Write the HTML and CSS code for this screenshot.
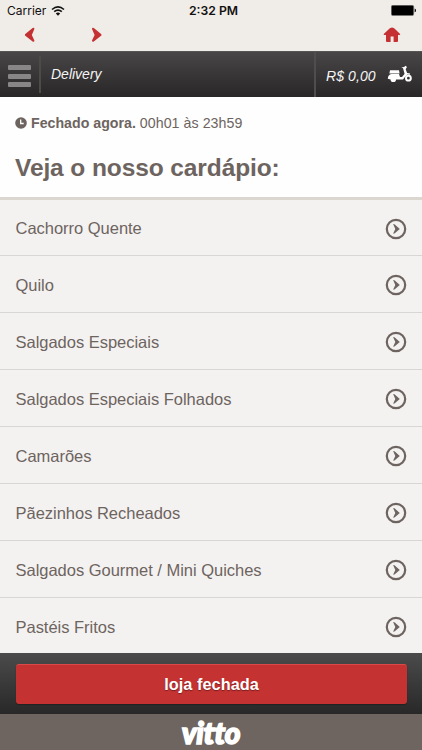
FILE: index.html
```
<!DOCTYPE html>
<html lang="pt-BR">
<head>
<meta charset="utf-8">
<title>Delivery</title>
<link rel="stylesheet" href="styles.css">
</head>
<body>
<svg class="defs" width="0" height="0" aria-hidden="true">
  <symbol id="go" viewBox="0 0 22 22"><circle cx="11" cy="11" r="9.2" fill="none" stroke="#6d6460" stroke-width="2.2"/><path d="M8.2 6.2Q9 5.8 9.8 6.5L14.8 11 9.8 15.3Q9 16 8.2 15.6L10.3 11Z" fill="#6d6460"/></symbol>
</svg>
<div class="app">
  <div class="status">
    <div class="carrier"><span>Carrier</span>
      <svg width="14" height="10" viewBox="0 0 14 10"><g fill="none" stroke="#111" stroke-width="1.6"><path d="M1 3.5Q7-1.6 13 3.5"/><path d="M3.2 5.7Q7 2.4 10.8 5.7"/></g><path d="M4.8 7.4Q7 5.7 9.2 7.4L7 9.7Z" fill="#111"/></svg>
    </div>
    <div class="time">2:32 PM</div>
    <svg class="battery" width="26" height="11" viewBox="0 0 26 11"><rect x=".3" y=".3" width="22.4" height="10.2" rx="1.5" fill="#000" stroke="#777" stroke-width=".6"/><path d="M23.7 3.5Q25 4 25 5.4T23.7 7.3Z" fill="#000"/></svg>
  </div>
  <div class="nav">
    <svg width="11" height="16" viewBox="0 0 11 16"><path d="M7.6 1Q9.4.2 9.4 2L6.8 8 9.4 13.4Q9.4 15.4 7.6 14.6L0 8.6V7.2Z" fill="#c53133"/></svg>
    <svg class="next" width="11" height="16" viewBox="0 0 11 16"><path d="M2.8 1Q1 .2 1 2L3.6 8 1 13.4Q1 15.4 2.8 14.6L10.4 8.6V7.2Z" fill="#c53133"/></svg>
    <svg class="home" width="18" height="16" viewBox="0 0 18 16"><path d="M9 .4Q11 .4 12 1.9L17.3 7.2 16.6 8H15V14Q15 15 14 15H10.6V9.5H7.6V15H4Q3 15 3 14V8H1.2L.5 7.2 6 1.9Q7 .4 9 .4Z" fill="#c53133"/></svg>
  </div>
  <header class="bar">
    <div class="menu"><i></i><i></i><i></i></div>
    <div class="title">Delivery</div>
    <div class="cart"><span>R$ 0,00</span>
      <svg width="25" height="18" viewBox="0 0 25 18"><path d="M3 5.3H12L12.6 8.4H2.4Z" fill="#fff"/><path d="M.8 13.8C.8 10.5 2.7 9 5 9H12L13 12H15L17.6 9 16 3 18 2.4 20.4 8.8 16 14.4H9A2.7 2.7 0 0 1 3.6 14.4Z" fill="#fff"/><path d="M14.2 2.4 17 1.9 18.5.8 20 2 18.4 4.6 17 3.4Z" fill="#fff"/><path d="M17.2 11.5Q19 7.6 22.8 9.2" fill="none" stroke="#fff" stroke-width="1.6"/><circle cx="21.4" cy="13.2" r="2.4" fill="none" stroke="#fff" stroke-width="2"/></svg>
    </div>
  </header>
  <section class="intro">
    <p><svg width="12" height="12" viewBox="0 0 12 12"><circle cx="6" cy="6" r="5.8" fill="#6d6460"/><path d="M5.7 2.5V6.5H8.7" fill="none" stroke="#fff" stroke-width="1.3"/></svg><b>Fechado agora.</b> <span>00h01 às 23h59</span></p>
    <h1>Veja o nosso cardápio:</h1>
  </section>
  <ul class="list">
    <li><span>Cachorro Quente</span><svg><use href="#go"/></svg></li>
    <li><span>Quilo</span><svg><use href="#go"/></svg></li>
    <li><span>Salgados Especiais</span><svg><use href="#go"/></svg></li>
    <li><span>Salgados Especiais Folhados</span><svg><use href="#go"/></svg></li>
    <li><span>Camarões</span><svg><use href="#go"/></svg></li>
    <li><span>Pãezinhos Recheados</span><svg><use href="#go"/></svg></li>
    <li><span>Salgados Gourmet / Mini Quiches</span><svg><use href="#go"/></svg></li>
    <li><span>Pastéis Fritos</span><svg><use href="#go"/></svg></li>
  </ul>
  <div class="action"><button>loja fechada</button></div>
  <footer class="brand"><span>vitto</span></footer>
</div>
</body>
</html>
```
FILE: styles.css
```
* { box-sizing: border-box; }
body { margin: 0; font-family: "Liberation Sans", Arial, sans-serif; color: #6d6460; background: #f0ece7; }
svg { display: block; flex: none; }
.defs { position: absolute; }
.app { width: 422px; height: 750px; overflow: hidden; display: flex; flex-direction: column; }

.status { height: 21px; flex: none; display: grid; grid-template-columns: 1fr auto 1fr; align-items: center; padding: 0 5px 0 7px; font-family: Inter, sans-serif; font-size: 12px; color: #111; }
.carrier { display: flex; align-items: center; gap: 5px; }
.time { font-weight: 600; padding-left: 3px; font-size: 12.2px; }
.battery { justify-self: end; }

.nav { height: 30px; flex: none; display: flex; align-items: flex-start; padding: 6px 21px 0 25px; }
.next { margin-left: 55px; }
.home { margin-left: auto; }

.bar { height: 46px; flex: none; display: flex; color: #f5f5f5; font-style: italic; font-size: 14px; background: linear-gradient(#494647, #282627); border-top: 1px solid #555; }
.menu { width: 41px; margin: 4px 0; padding: 9px 0 0 8px; border-right: 2px solid #4d4a48; display: flex; flex-direction: column; gap: 3.5px; }
.menu i { width: 23px; height: 5px; border-radius: 1px; background: #898687; }
.title { padding: 14px 0 0 10px; line-height: 16px; }
.cart { margin-left: auto; width: 108px; border-left: 2px solid #504d4c; padding: 13px 10px 0 10px; display: flex; justify-content: space-between; }
.cart span { line-height: 22px; letter-spacing: .1px; }

.intro { height: 103px; flex: none; background: #fefefe; border-bottom: 3px solid #dbd6d0; padding: 17px 15px 0; }
.intro p { margin: 0; height: 18px; display: flex; align-items: center; gap: 4px; font-size: 14.2px; }
.intro p span { letter-spacing: .05px; }
.intro h1 { margin: 20px 0 0; font-size: 24.5px; line-height: 32px; letter-spacing: -.1px; white-space: nowrap; }

.list { list-style: none; margin: 0; padding: 0; height: 453px; flex: none; overflow: hidden; background: #f4f2f1; font-size: 16.5px; }
.list li { height: 57px; display: flex; align-items: center; justify-content: space-between; padding: 2px 15px 0 15.5px; border-bottom: 1px solid #d8d5d2; letter-spacing: -.02px; }
.list li:first-child { height: 56px; }
.list svg { width: 22px; height: 22px; }

.action { height: 61px; flex: none; padding: 11px 15px 10px 16px; background: linear-gradient(#4b4b4b, #282828); }
.action button { width: 100%; height: 40px; border: 0; border-top: 1px solid #d94a48; border-radius: 3px; background: #c43232; color: #fff; font: bold 16.3px "Liberation Sans", Arial, sans-serif; letter-spacing: .05px; text-shadow: 0 1px 1px #7a1f1f; box-shadow: 0 1px 1px #222; }

.brand { height: 36px; flex: none; display: flex; justify-content: center; background: #6e6561; color: #fff; font: italic 900 30px/36px Lato, sans-serif; letter-spacing: -.3px; -webkit-text-stroke: 1.6px #fff; }
```
